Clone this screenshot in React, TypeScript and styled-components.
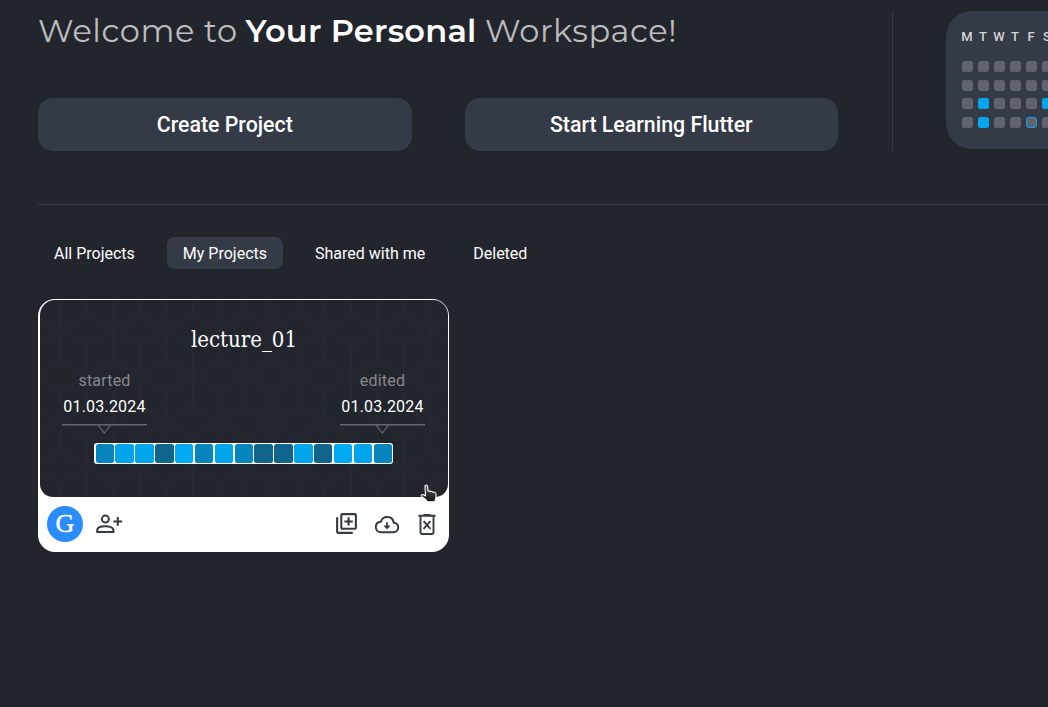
import React from "react";
import styled, { createGlobalStyle } from "styled-components";
import { MdOutlineLibraryAdd } from "react-icons/md";

const GlobalStyle = createGlobalStyle`
  * { box-sizing: border-box; }
  html, body { margin: 0; overflow: hidden; background: #22252c; }
  button { border: 0; font: inherit; color: inherit; background: none; padding: 0; white-space: nowrap; }
`;

const Page = styled.main`
  width: 1048px;
  height: 707px;
  overflow: hidden;
  padding-left: 38px;
  background: #22252c;
  color: #fff;
  font-family: Roboto, sans-serif;
`;

const Header = styled.header`
  display: flex;
  height: 205px;
  padding-top: 11px;
  border-bottom: 1px solid #353941;
`;

const Intro = styled.section`
  display: flex;
  flex-direction: column;
  justify-content: space-between;
  flex: 0 0 855px;
  height: 140px;
  border-right: 1px solid #353941;
`;

const Title = styled.h1`
  display: flex;
  margin: 0;
  height: 40px;
  line-height: 40px;
  font-family: Montserrat, Inter, sans-serif;
  font-size: 32px;
  font-weight: 400;
  white-space: pre;
  color: #bcbdbe;
`;

const TitlePart = styled.span<{ $width: number; $spacing: number; $strong?: boolean }>`
  width: ${(p) => p.$width}px;
  letter-spacing: ${(p) => p.$spacing}px;
  font-weight: ${(p) => (p.$strong ? 600 : 400)};
  color: ${(p) => (p.$strong ? "#fff" : "inherit")};
`;

const Actions = styled.div`
  display: flex;
  gap: 53px;
`;

const ActionButton = styled.button`
  width: 373.5px;
  height: 53px;
  border-radius: 15px;
  background: #343a46;
  font-size: 21.33px;
  font-weight: 500;
`;

const Activity = styled.section`
  flex: 0 0 180px;
  height: 138px;
  margin-left: 53px;
  padding: 18px 16px;
  border-radius: 26px;
  background: #343a46;
`;

const Weekdays = styled.div`
  display: grid;
  grid-template-columns: repeat(7, 16px);
  height: 16px;
  margin-bottom: 16px;
  font-size: 13px;
  line-height: 16px;
  font-weight: 500;
  color: #d5d6d9;
`;

const Weekday = styled.span`
  width: 10px;
  display: flex;
  justify-content: center;
`;

const Days = styled.div`
  display: grid;
  grid-template-columns: repeat(7, 11px);
  column-gap: 5px;
  row-gap: 7.67px;
`;

const Day = styled.span<{ $state: string }>`
  height: 11px;
  border-radius: 2.5px;
  background: ${(p) => (p.$state === "x" ? "#04a5ec" : "#60636d")};
  border: ${(p) => (p.$state === "o" ? "1px solid #04a5ec" : "0")};
`;

const Tabs = styled.nav`
  display: flex;
  gap: 16px;
  margin: 32px 0 30px;
`;

const Tab = styled.button<{ $active?: boolean }>`
  height: 32px;
  padding: 0 16px;
  border-radius: 8px;
  font-size: 16px;
  background: ${(p) => (p.$active ? "#343a46" : "transparent")};
`;

const Card = styled.article`
  position: relative;
  width: 411px;
  height: 253px;
  padding: 1px 1px 0 2px;
  border-radius: 17px;
  background: #fff;
`;

const CardBody = styled.div`
  position: relative;
  height: 197px;
  padding-top: 25px;
  border-radius: 15px 15px 13px 13px;
  overflow: hidden;
  background: #22252c;
`;

const HexBackdrop = styled.svg`
  position: absolute;
  inset: 0;
`;

const CardContent = styled.div`
  position: relative;
  display: flex;
  flex-direction: column;
  align-items: center;
`;

const ProjectName = styled.h2`
  margin: 0;
  height: 30px;
  line-height: 30px;
  font-family: "Roboto Slab", "DejaVu Serif Condensed", "DejaVu Serif", serif;
  font-size: 22px;
  font-weight: 400;
  font-stretch: condensed;
`;

const Dates = styled.div`
  display: flex;
  justify-content: space-between;
  width: 363px;
  margin: 13px 1px 0 0;
`;

const DateBlock = styled.div`
  display: flex;
  flex-direction: column;
  align-items: center;
  width: 85px;
  font-size: 16px;
  line-height: 26px;
  letter-spacing: 0.2px;
`;

const DateLabel = styled.span`
  color: #86888c;
`;

const DateMarker = styled.svg`
  margin-top: 4px;
`;

const Timeline = styled.div`
  display: grid;
  grid-template-columns: repeat(15, 1fr);
  gap: 1.5px;
  width: 299px;
  height: 21px;
  margin: 9px 1px 0 0;
  padding: 1px 1px 1px 1.6px;
  border-radius: 3px;
  background: #fff;
`;

const Segment = styled.span<{ $color: string }>`
  border-radius: 2.5px;
  background: ${(p) => p.$color};
`;

const CardFooter = styled.footer`
  display: flex;
  align-items: center;
  height: 54px;
  padding: 0 12.5px 0 7px;
  color: #343a46;
`;

const Avatar = styled.span`
  display: flex;
  align-items: center;
  justify-content: center;
  width: 36px;
  height: 36px;
  margin-right: 12.5px;
  border-radius: 50%;
  background: #2a8cff;
  color: #fff;
  font-family: "Liberation Serif", serif;
  font-size: 26px;
  line-height: 36px;
  -webkit-text-stroke: 0.4px #fff;
`;

const Tools = styled.div`
  display: flex;
  align-items: center;
  margin: 0 0 1px auto;
`;

const IconButton = styled.button<{ $after?: number }>`
  display: flex;
  margin-right: ${(p) => p.$after ?? 0}px;
`;

const Pointer = styled.svg`
  position: absolute;
  left: 382px;
  top: 185px;
`;

const weekdays = ["M", "T", "W", "T", "F", "S", "S"];
const days = "...............x...x..x..o..";
const shade: Record<string, string> = { a: "#0885bd", b: "#02a5ec", c: "#10658c", d: "#02aaf4" };
const segments = "abbcdabaccbcdba";

function DateColumn({ label, date }: { label: string; date: string }) {
  return (
    <DateBlock>
      <DateLabel>{label}</DateLabel>
      <span>{date}</span>
      <DateMarker width="85" height="10" viewBox="0 0 85 10" fill="none" stroke="#65676c">
        <path d="M0 .7H85" strokeWidth="1.4" />
        <path d="M36 1L42.3 9L48.6 1" strokeWidth="1.2" />
      </DateMarker>
    </DateBlock>
  );
}

function PersonAdd() {
  return (
    <svg width="27" height="20" viewBox="0 0 27 20" fill="none" stroke="currentColor" strokeWidth="2">
      <circle cx="9.4" cy="5.1" r="3.5" />
      <path d="M1.2 18V16.2C1.2 13.6 5.2 12.3 9.2 12.3S17.4 13.6 17.4 16.2V18Z" />
      <path d="M17.4 7.4H26.2M21.8 3V11.8" />
    </svg>
  );
}

function CloudDownload() {
  return (
    <svg width="26" height="24" viewBox="0 0 26 24" fill="none" stroke="currentColor" strokeWidth="2" strokeLinecap="round" strokeLinejoin="round">
      <path d="M7 20.2H19.2C22 20.2 24.2 18.2 24.2 15.5C24.2 12.8 22.4 11 19.7 10.8C19.4 7.2 16.8 4.9 13.2 4.9C10 4.9 7.6 6.9 6.9 9.8C3.9 10 1.8 12.1 1.8 15C1.8 17.9 4 20.2 7 20.2Z" />
      <path d="M13 11V16M11 14.2L13 16.2L15 14.2" strokeWidth="1.8" />
    </svg>
  );
}

function TrashCross() {
  return (
    <svg width="18" height="22" viewBox="0 0 18 22" fill="none" stroke="currentColor" strokeWidth="1.9">
      <path d="M.5 2.8H17.5M5.5 2H12.5M2.5 3V19.2Q2.5 21 4.3 21H13.7Q15.5 21 15.5 19.2V3" />
      <path d="M5.6 8.2L12.4 15.8M12.4 8.2L5.6 15.8" />
    </svg>
  );
}

export default function App() {
  return (
    <>
      <GlobalStyle />
      <Page>
        <Header>
          <Intro>
            <Title>
              <TitlePart $width={207.5} $spacing={0.6}>Welcome to </TitlePart>
              <TitlePart $width={239.5} $spacing={0.25} $strong>Your Personal </TitlePart>
              <TitlePart $width={200} $spacing={0.55}>Workspace!</TitlePart>
            </Title>
            <Actions>
              <ActionButton>Create Project</ActionButton>
              <ActionButton>Start Learning Flutter</ActionButton>
            </Actions>
          </Intro>
          <Activity>
            <Weekdays>
              {weekdays.map((d, i) => <Weekday key={i}>{d}</Weekday>)}
            </Weekdays>
            <Days>
              {[...days].map((d, i) => <Day key={i} $state={d} />)}
            </Days>
          </Activity>
        </Header>
        <Tabs>
          <Tab>All Projects</Tab>
          <Tab $active>My Projects</Tab>
          <Tab>Shared with me</Tab>
          <Tab>Deleted</Tab>
        </Tabs>
        <Card>
          <CardBody>
            <HexBackdrop width="408" height="197">
              <defs>
                <pattern id="cubes" width="52.9" height="91.6" x="20.3" y="30.3" patternUnits="userSpaceOnUse">
                  <path
                    d="M0 0V30.5M52.9 0V30.5M0 61.1V91.6M52.9 61.1V91.6M26.45 15.3V76.3M0 0L26.45 15.3L52.9 0M0 30.5L52.9 61.1M52.9 30.5L0 61.1M0 91.6L26.45 76.3L52.9 91.6"
                    fill="none"
                    stroke="#272a31"
                  />
                </pattern>
              </defs>
              <rect width="408" height="197" fill="url(#cubes)" />
            </HexBackdrop>
            <CardContent>
              <ProjectName>lecture_01</ProjectName>
              <Dates>
                <DateColumn label="started" date="01.03.2024" />
                <DateColumn label="edited" date="01.03.2024" />
              </Dates>
              <Timeline>
                {[...segments].map((s, i) => <Segment key={i} $color={shade[s]} />)}
              </Timeline>
            </CardContent>
          </CardBody>
          <CardFooter>
            <Avatar>G</Avatar>
            <IconButton aria-label="Add person"><PersonAdd /></IconButton>
            <Tools>
              <IconButton aria-label="Duplicate" $after={14.5}><MdOutlineLibraryAdd size={25} /></IconButton>
              <IconButton aria-label="Download" $after={18}><CloudDownload /></IconButton>
              <IconButton aria-label="Delete"><TrashCross /></IconButton>
            </Tools>
          </CardFooter>
          <Pointer width="18" height="20" viewBox="0 0 18 20">
            <defs>
              <linearGradient id="hand" x1="0" y1="0" x2="0" y2="1">
                <stop offset="0" stopColor="#555" />
                <stop offset="1" stopColor="#151515" />
              </linearGradient>
            </defs>
            <path
              d="M5 2.3C5 .6 7.5.6 7.6 2.3L8 7.2C8.7 6.5 10 6.7 10.4 7.7C11.2 7.1 12.5 7.4 12.9 8.3C14.4 7.7 16 8.5 16 10.2V12.8C16 14.6 15 15.8 15 17.8H7.2C6.7 15.5 3.5 14.2 1.5 12.4C.5 11.2 2 10.1 3.2 10.7L5.5 12Z"
              fill="url(#hand)"
              stroke="#fff"
              strokeWidth="1.1"
              strokeLinejoin="round"
            />
          </Pointer>
        </Card>
      </Page>
    </>
  );
}
